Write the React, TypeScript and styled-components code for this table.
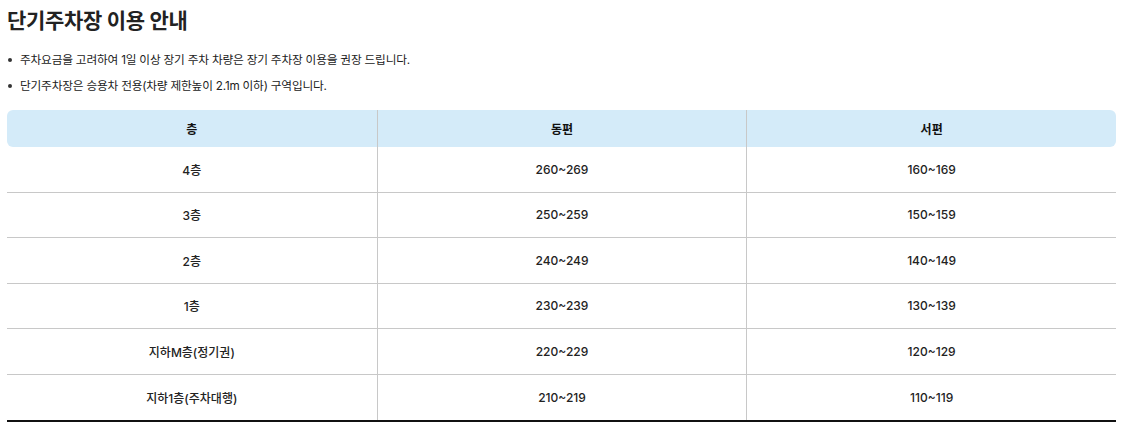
import styled, { createGlobalStyle } from "styled-components";

const GlobalStyle = createGlobalStyle`
  html, body {
    margin: 0;
    padding: 0;
    background: #fff;
  }
  body {
    font-family: Inter, "Noto Sans CJK KR", sans-serif;
    color: #222;
  }
`;

const Page = styled.div`
  padding: 7px 11px 0 7px;
`;

const Title = styled.h2`
  margin: 0;
  font-size: 21px;
  line-height: 27px;
  font-weight: 700;
  color: #222;
  letter-spacing: -0.3px;
`;

const NoticeList = styled.ul`
  list-style: none;
  margin: 17px 0 0;
  padding: 0;
  display: flex;
  flex-direction: column;
  gap: 8px;
`;

const NoticeItem = styled.li`
  position: relative;
  padding-left: 13px;
  font-size: 11.7px;
  line-height: 18px;
  color: #222;
  letter-spacing: -0.2px;

  &::before {
    content: "";
    position: absolute;
    left: 1px;
    top: 7px;
    width: 4px;
    height: 4px;
    border-radius: 50%;
    background: #333;
  }
`;

const Table = styled.div`
  margin-top: 15px;
  display: grid;
  grid-template-columns: repeat(3, 1fr);
  border-bottom: 2px solid #111;
`;

const HeadRow = styled.div`
  grid-column: 1 / -1;
  display: grid;
  grid-template-columns: subgrid;
  background: #d4ebf9;
  border-radius: 6px;
  height: 37px;
`;

const Row = styled.div<{ $last?: boolean }>`
  grid-column: 1 / -1;
  display: grid;
  grid-template-columns: subgrid;
  height: 45.5px;
  box-sizing: border-box;
  border-bottom: ${(p) => (p.$last ? "none" : "1px solid #c8c8c8")};
`;

const Cell = styled.div<{ $head?: boolean }>`
  display: flex;
  align-items: center;
  justify-content: center;
  font-size: 12px;
  font-weight: ${(p) => (p.$head ? 700 : 500)};
  color: ${(p) => (p.$head ? "#111" : "#222")};
  & + & {
    border-left: 1px solid #c8c8c8;
  }
`;

const floors = [
  { name: "4층", east: "260~269", west: "160~169" },
  { name: "3층", east: "250~259", west: "150~159" },
  { name: "2층", east: "240~249", west: "140~149" },
  { name: "1층", east: "230~239", west: "130~139" },
  { name: "지하M층(정기권)", east: "220~229", west: "120~129" },
  { name: "지하1층(주차대행)", east: "210~219", west: "110~119" },
];

export default function App() {
  return (
    <Page>
      <GlobalStyle />
      <Title>단기주차장 이용 안내</Title>
      <NoticeList>
        <NoticeItem>주차요금을 고려하여 1일 이상 장기 주차 차량은 장기 주차장 이용을 권장 드립니다.</NoticeItem>
        <NoticeItem>단기주차장은 승용차 전용(차량 제한높이 2.1m 이하) 구역입니다.</NoticeItem>
      </NoticeList>
      <Table>
        <HeadRow>
          <Cell $head>층</Cell>
          <Cell $head>동편</Cell>
          <Cell $head>서편</Cell>
        </HeadRow>
        {floors.map((f, i) => (
          <Row key={f.name} $last={i === floors.length - 1}>
            <Cell>{f.name}</Cell>
            <Cell>{f.east}</Cell>
            <Cell>{f.west}</Cell>
          </Row>
        ))}
      </Table>
    </Page>
  );
}
